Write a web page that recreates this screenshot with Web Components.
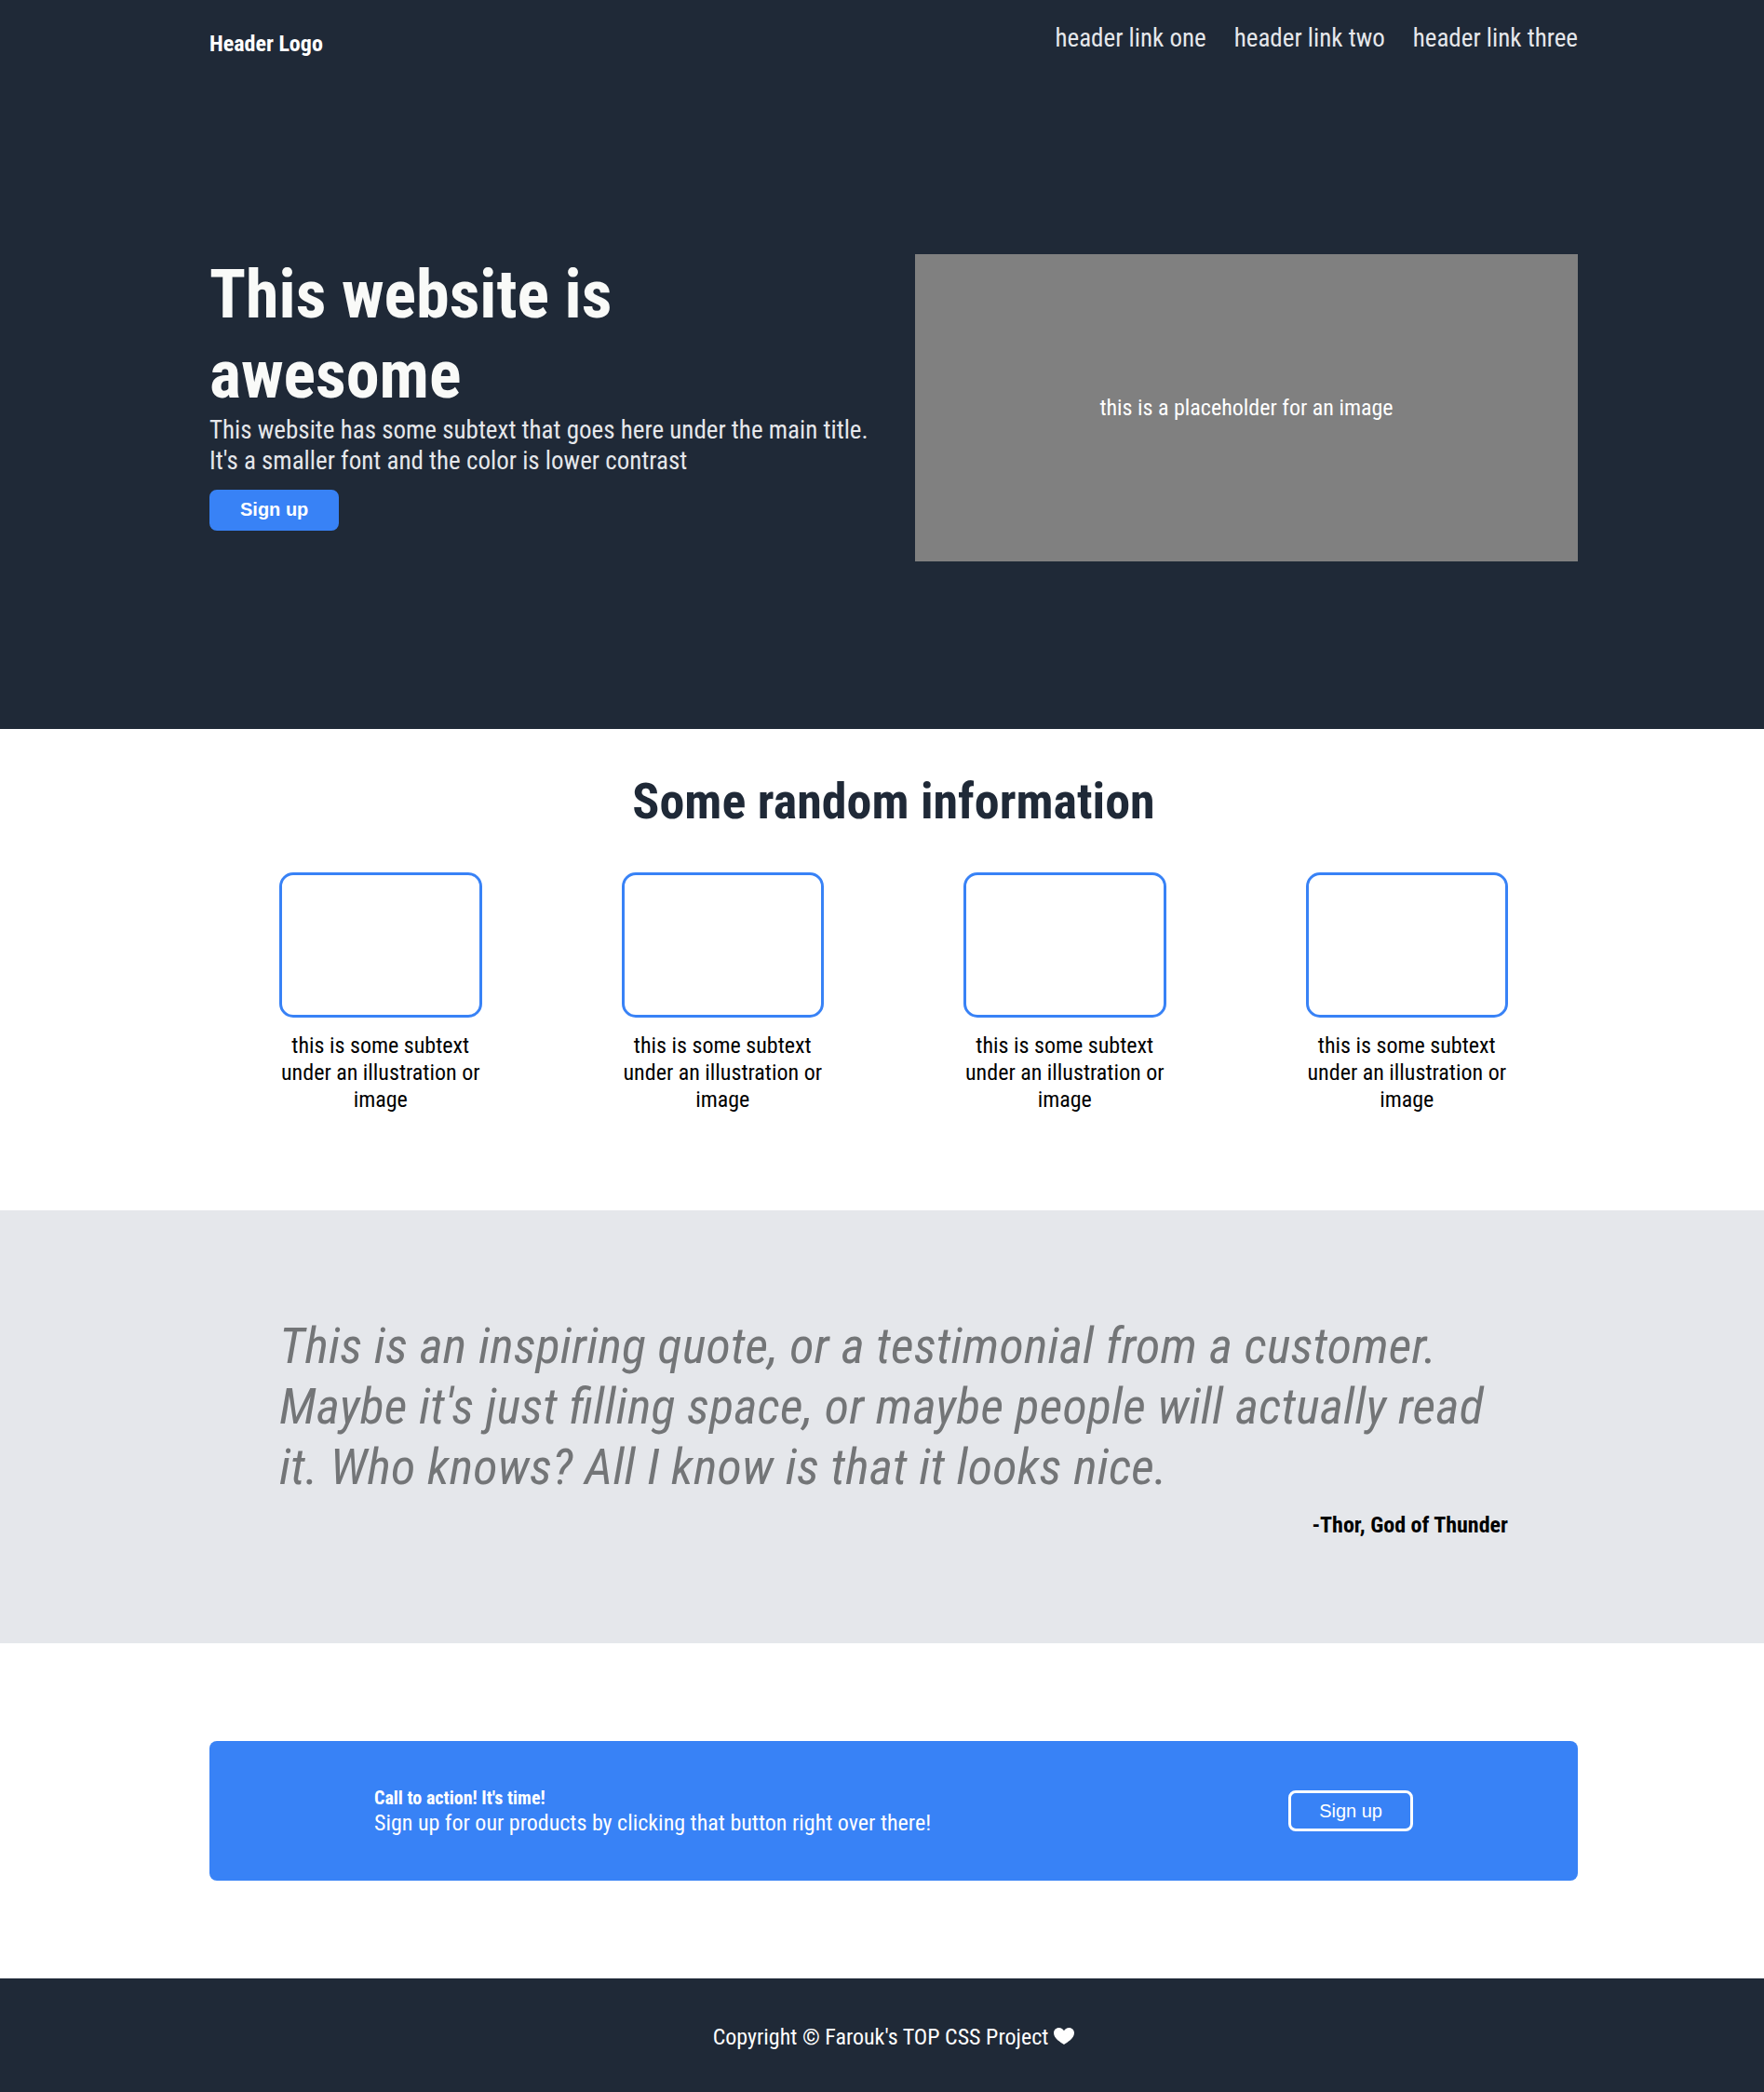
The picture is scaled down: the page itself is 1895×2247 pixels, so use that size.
<!DOCTYPE html>
<html lang="en">
<head>
<meta charset="utf-8">
<title>Landing page</title>
<style>
  body { margin: 0; background: #fff; color: #000; font-family: "Roboto Condensed", Roboto, "Liberation Sans", sans-serif; font-stretch: condensed; font-size: 24px; line-height: 29px; }
</style>
</head>
<body>
<landing-page></landing-page>
<script>
const define = (name, html) => {
  const template = document.createElement('template');
  template.innerHTML = html;
  customElements.define(name, class extends HTMLElement {
    constructor() {
      super();
      this.attachShadow({ mode: 'open' }).append(template.content.cloneNode(true));
    }
  });
};

define('action-button', `
<style>
  :host { display: block; flex: none; }
  button { display: block; box-sizing: border-box; height: 44px; margin: 0; padding: 0 30px 1px; border: 3px solid #3882f6; border-radius: 8px; background: #3882f6; color: #fff; font: 700 20px/23px "Liberation Sans", Arial, sans-serif; }
  :host([outline]) button { padding-bottom: 0; border-color: #fff; font-weight: 400; }
</style>
<button><slot></slot></button>`);

define('site-nav', `
<style>
  :host { display: flex; justify-content: space-between; align-items: flex-start; height: 273px; }
  .logo { margin-top: 33px; color: #fff; font-weight: 700; }
  nav { display: flex; gap: 30px; margin-top: 25px; color: #e5e7eb; font-size: 27px; line-height: 33px; }
</style>
<div class="logo">Header Logo</div>
<nav><span>header link one</span><span>header link two</span><span>header link three</span></nav>`);

define('hero-banner', `
<style>
  :host { display: block; box-sizing: border-box; height: 783px; padding: 0 200px 0 225px; background: #1f2937; }
  .row { display: flex; justify-content: space-between; align-items: flex-start; }
  .copy { width: 712px; }
  h1 { margin: 1px 0 0; color: #f9faf8; font-size: 72px; line-height: 86px; font-weight: 700; }
  p { margin: 0 0 14px; color: #e5e7eb; font-size: 27px; line-height: 33px; }
  action-button { width: max-content; }
  .image { display: flex; align-items: center; justify-content: center; width: 712px; height: 330px; background: #808080; color: #fff; }
</style>
<site-nav></site-nav>
<div class="row">
  <div class="copy">
    <h1>This website is awesome</h1>
    <p>This website has some subtext that goes here under the main title. It's a smaller font and the color is lower contrast</p>
    <action-button>Sign up</action-button>
  </div>
  <div class="image">this is a placeholder for an image</div>
</div>`);

define('info-card', `
<style>
  :host { display: block; flex: 1; padding: 0 75px; text-align: center; }
  .frame { box-sizing: border-box; height: 156px; margin-bottom: 16px; border: 3px solid #3882f6; border-radius: 15px; }
</style>
<div class="frame"></div>
<slot></slot>`);

define('info-section', `
<style>
  :host { display: block; box-sizing: border-box; height: 517px; padding: 45px 200px 0 225px; }
  h2 { margin: 0 0 44px; color: #1f2937; font-size: 54px; line-height: 65px; font-weight: 700; text-align: center; }
  .cards { display: flex; }
</style>
<h2>Some random information</h2>
<div class="cards">
  <info-card>this is some subtext under an illustration or image</info-card>
  <info-card>this is some subtext under an illustration or image</info-card>
  <info-card>this is some subtext under an illustration or image</info-card>
  <info-card>this is some subtext under an illustration or image</info-card>
</div>`);

define('quote-section', `
<style>
  :host { display: block; box-sizing: border-box; height: 465px; padding: 113px 275px 0 300px; background: #e5e7eb; }
  blockquote { margin: 0; color: #737577; font-size: 54px; line-height: 65px; font-style: italic; letter-spacing: 0.2px; font-feature-settings: "liga" 1; }
  cite { display: block; margin-top: 16px; font-style: normal; font-weight: 700; text-align: right; }
</style>
<blockquote>This is an inspiring quote, or a testimonial from a customer. Maybe it's just filling space, or maybe people will actually read it. Who knows? All I know is that it looks nice.</blockquote>
<cite>-Thor, God of Thunder</cite>`);

define('call-to-action', `
<style>
  :host { display: block; padding: 105px 200px 105px 225px; }
  .panel { display: flex; align-items: center; justify-content: space-between; box-sizing: border-box; height: 150px; padding: 0 177px; border-radius: 8px; background: #3882f6; color: #fff; }
  strong { display: block; font-size: 20px; line-height: 26px; }
  p { margin: 0; }
</style>
<div class="panel">
  <div><strong>Call to action! It's time!</strong><p>Sign up for our products by clicking that button right over there!</p></div>
  <action-button outline>Sign up</action-button>
</div>`);

define('site-footer', `
<style>
  :host { display: flex; justify-content: center; align-items: flex-start; gap: 6px; box-sizing: border-box; height: 122px; padding: 49px 200px 0 225px; background: #1f2937; color: #fff; }
  svg { flex: none; margin-top: 4px; }
</style>
<span>Copyright © Farouk's TOP CSS Project</span>
<svg width="22" height="18" viewBox="0 0 22 18"><path fill="#fff" d="M11 18C7.5 15.8 0 11.6 0 5.6C0 2.3 2.5 0 5.6 0C8 0 10 1.300 11 3.300C12 1.300 14 0 16.400 0C19.500 0 22 2.300 22 5.600C22 11.600 14.500 15.800 11 18Z"/></svg>`);

define('landing-page', `
<style>:host { display: block; }</style>
<hero-banner></hero-banner>
<info-section></info-section>
<quote-section></quote-section>
<call-to-action></call-to-action>
<site-footer></site-footer>`);
</script>
</body>
</html>
